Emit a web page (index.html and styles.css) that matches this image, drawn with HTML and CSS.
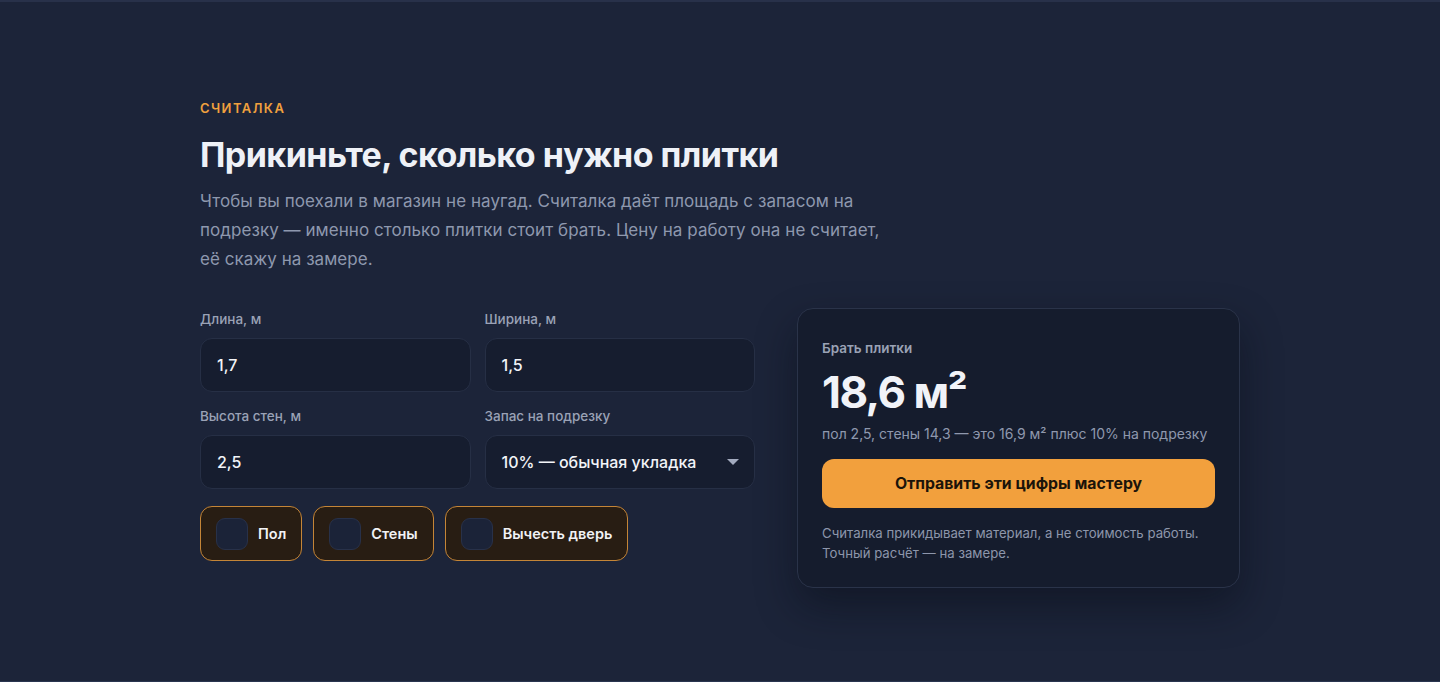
FILE: index.html
```html
<!DOCTYPE html>
<html lang="ru">
<head>
<meta charset="utf-8">
<title>Считалка</title>
<link rel="stylesheet" href="styles.css">
</head>
<body>
<main class="page">
  <section class="wrap">
    <div class="eyebrow">СЧИТАЛКА</div>
    <h1 class="title">Прикиньте, сколько нужно плитки</h1>
    <p class="lead">Чтобы вы поехали в магазин не наугад. Считалка даёт площадь с запасом на подрезку — именно столько плитки стоит брать. Цену на работу она не считает, её скажу на замере.</p>

    <div class="grid">
      <form class="form">
        <div class="fields">
          <label class="field">
            <span class="label">Длина, м</span>
            <span class="input">1,7</span>
          </label>
          <label class="field">
            <span class="label">Ширина, м</span>
            <span class="input">1,5</span>
          </label>
          <label class="field">
            <span class="label">Высота стен, м</span>
            <span class="input">2,5</span>
          </label>
          <label class="field">
            <span class="label">Запас на подрезку</span>
            <span class="input select">10% — обычная укладка<span class="caret"></span></span>
          </label>
        </div>
        <div class="chips">
          <span class="chip"><span class="box"></span>Пол</span>
          <span class="chip"><span class="box"></span>Стены</span>
          <span class="chip"><span class="box"></span>Вычесть дверь</span>
        </div>
      </form>

      <aside class="card">
        <div class="card-label">Брать плитки</div>
        <div class="total">18,6 м²</div>
        <div class="breakdown">пол 2,5, стены 14,3 — это 16,9 м² плюс 10% на подрезку</div>
        <button class="btn" type="button">Отправить эти цифры мастеру</button>
        <p class="note">Считалка прикидывает материал, а не стоимость работы.<br>Точный расчёт — на замере.</p>
      </aside>
    </div>
  </section>
</main>
</body>
</html>
```

FILE: styles.css
```css
* { box-sizing: border-box; }
html, body { margin: 0; padding: 0; }
body {
  background: #1c2439;
  font-family: Inter, "Noto Sans", "Liberation Sans", sans-serif;
  color: #e9edf5;
}
.page {
  min-height: 682px;
  border-top: 2px solid #28314a;
  border-bottom: 1px solid #2a3550;
  padding: 98px 0 0;
}
.wrap {
  width: 1040px;
  margin: 0 auto;
}
.eyebrow {
  font-size: 13px;
  line-height: 16px;
  font-weight: 600;
  letter-spacing: 0.11em;
  color: #f0a03e;
}
.title {
  margin: 18px 0 0;
  font-size: 34px;
  line-height: 41px;
  font-weight: 700;
  letter-spacing: -0.016em;
  color: #eef1f7;
}
.lead {
  margin: 12px 0 0;
  max-width: 700px;
  font-size: 17px;
  line-height: 29px;
  letter-spacing: 0.003em;
  color: #8e98ae;
}
.grid {
  margin-top: 34px;
  display: grid;
  grid-template-columns: 555px 443px;
  column-gap: 42px;
  align-items: start;
}
.form { padding-top: 2px; }
.fields {
  display: grid;
  grid-template-columns: 1fr 1fr;
  column-gap: 14px;
  row-gap: 15px;
}
.field { display: flex; flex-direction: column; }
.label {
  font-size: 13.5px;
  line-height: 18px;
  font-weight: 500;
  color: #9aa2b6;
  margin-bottom: 10px;
}
.input {
  position: relative;
  height: 54px;
  display: flex;
  align-items: center;
  padding: 0 16px;
  background: #161d2f;
  border: 1px solid #262f45;
  border-radius: 12px;
  font-size: 16px;
  font-weight: 500;
  color: #f2f4f8;
}
.caret {
  position: absolute;
  right: 15px;
  top: 23px;
  width: 0;
  height: 0;
  border-left: 6px solid transparent;
  border-right: 6px solid transparent;
  border-top: 6px solid #a3abbf;
}
.chips {
  margin-top: 17px;
  display: flex;
  gap: 11px;
}
.chip {
  height: 55px;
  display: flex;
  align-items: center;
  gap: 10px;
  padding: 0 15px;
  background: #281d13;
  border: 1px solid #c48537;
  border-radius: 12px;
  font-size: 14.5px;
  font-weight: 600;
  color: #f1f2f5;
}
.box {
  width: 32px;
  height: 32px;
  border-radius: 9px;
  background: #1b2338;
  border: 1px solid #283149;
}
.card {
  background: #151c2d;
  border: 1px solid #2a3349;
  border-radius: 16px;
  padding: 30px 24px 24px;
  box-shadow: 0 18px 40px rgba(6, 10, 20, 0.45);
}
.card-label {
  font-size: 13.5px;
  line-height: 18px;
  font-weight: 600;
  color: #9aa2b5;
}
.total {
  margin-top: 10px;
  font-size: 44px;
  line-height: 51px;
  font-weight: 700;
  letter-spacing: -0.035em;
  color: #f1f3f8;
}
.breakdown {
  margin-top: 6px;
  font-size: 14px;
  line-height: 20px;
  color: #8f98ad;
}
.btn {
  display: block;
  width: 100%;
  margin-top: 15px;
  height: 49px;
  border: 0;
  border-radius: 12px;
  background: #f2a03d;
  font-family: inherit;
  font-size: 15.8px;
  font-weight: 700;
  color: #1b140a;
}
.note {
  margin: 15px 0 0;
  font-size: 13.2px;
  line-height: 20px;
  color: #8d96ab;
}
```
